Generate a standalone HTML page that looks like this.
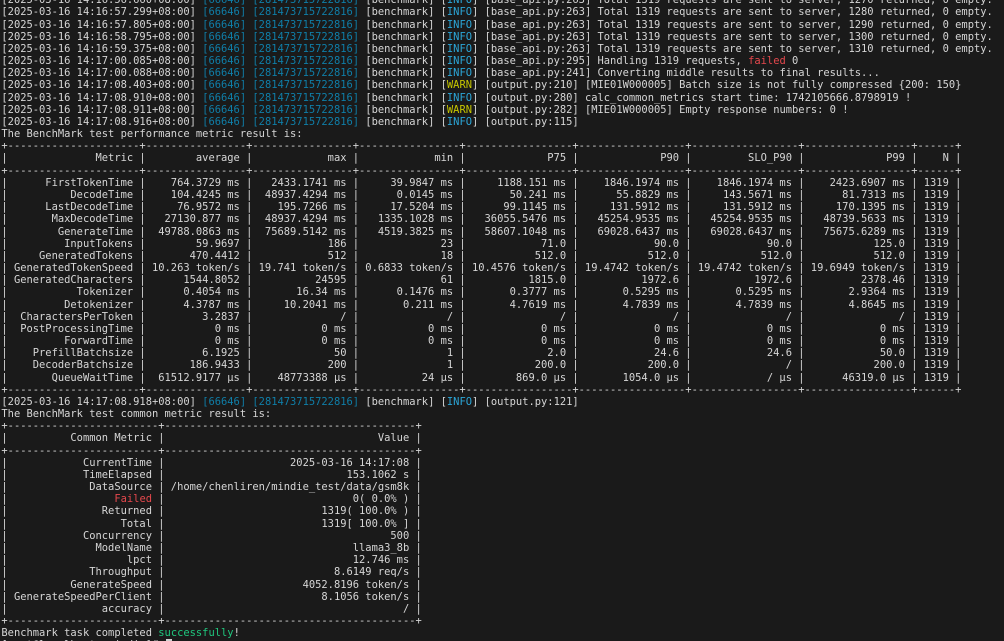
<!DOCTYPE html>
<html>
<head>
<meta charset="utf-8">
<style>
html,body{margin:0;padding:0;width:1004px;height:641px;overflow:hidden;background:#1a1a1a}
#w{position:absolute;left:0;top:0;width:1004px;height:641px;overflow:hidden;background:#1a1a1a}
pre{position:absolute;left:1.4px;top:-5.75px;margin:0;font-family:"DejaVu Sans Mono","Liberation Mono",monospace;font-size:10.43px;line-height:12.165px;color:#d6d6d6;white-space:pre;filter:blur(.25px)}
.c{color:#0f7ea8}
.i{color:#2ba6d8}
.w{color:#c6c600}
.r{color:#e5484d}
.g{color:#1fc77e}
.cur{position:absolute;left:166px;top:639px;width:6px;height:12px;background:#cfcfcf}
</style>
</head>
<body>
<div id="w">
<pre>[2025-03-16 14:16:56.660+08:00] <span class="c">[66646]</span> <span class="c">[281473715722816]</span> [benchmark] [<span class="i">INFO</span>] [base_api.py:263] Total 1319 requests are sent to server, 1270 returned, 0 empty.
[2025-03-16 14:16:57.299+08:00] <span class="c">[66646]</span> <span class="c">[281473715722816]</span> [benchmark] [<span class="i">INFO</span>] [base_api.py:263] Total 1319 requests are sent to server, 1280 returned, 0 empty.
[2025-03-16 14:16:57.805+08:00] <span class="c">[66646]</span> <span class="c">[281473715722816]</span> [benchmark] [<span class="i">INFO</span>] [base_api.py:263] Total 1319 requests are sent to server, 1290 returned, 0 empty.
[2025-03-16 14:16:58.795+08:00] <span class="c">[66646]</span> <span class="c">[281473715722816]</span> [benchmark] [<span class="i">INFO</span>] [base_api.py:263] Total 1319 requests are sent to server, 1300 returned, 0 empty.
[2025-03-16 14:16:59.375+08:00] <span class="c">[66646]</span> <span class="c">[281473715722816]</span> [benchmark] [<span class="i">INFO</span>] [base_api.py:263] Total 1319 requests are sent to server, 1310 returned, 0 empty.
[2025-03-16 14:17:00.085+08:00] <span class="c">[66646]</span> <span class="c">[281473715722816]</span> [benchmark] [<span class="i">INFO</span>] [base_api.py:295] Handling 1319 requests, <span class="r">failed</span> 0
[2025-03-16 14:17:00.088+08:00] <span class="c">[66646]</span> <span class="c">[281473715722816]</span> [benchmark] [<span class="i">INFO</span>] [base_api.py:241] Converting middle results to final results...
[2025-03-16 14:17:08.403+08:00] <span class="c">[66646]</span> <span class="c">[281473715722816]</span> [benchmark] [<span class="w">WARN</span>] [output.py:210] [MIE01W000005] Batch size is not fully compressed {200: 150}
[2025-03-16 14:17:08.910+08:00] <span class="c">[66646]</span> <span class="c">[281473715722816]</span> [benchmark] [<span class="i">INFO</span>] [output.py:280] calc_common_metrics start time: 1742105666.8798919 !
[2025-03-16 14:17:08.911+08:00] <span class="c">[66646]</span> <span class="c">[281473715722816]</span> [benchmark] [<span class="w">WARN</span>] [output.py:282] [MIE01W000005] Empty response numbers: 0 !
[2025-03-16 14:17:08.916+08:00] <span class="c">[66646]</span> <span class="c">[281473715722816]</span> [benchmark] [<span class="i">INFO</span>] [output.py:115]
The BenchMark test performance metric result is:
+---------------------+----------------+----------------+----------------+-----------------+-----------------+-----------------+-----------------+------+
|              Metric |        average |            max |            min |             P75 |             P90 |         SLO_P90 |             P99 |    N |
+---------------------+----------------+----------------+----------------+-----------------+-----------------+-----------------+-----------------+------+
|      FirstTokenTime |    764.3729 ms |   2433.1741 ms |     39.9847 ms |     1188.151 ms |    1846.1974 ms |    1846.1974 ms |    2423.6907 ms | 1319 |
|          DecodeTime |    104.4245 ms |  48937.4294 ms |      0.0145 ms |       50.241 ms |      55.8829 ms |     143.5671 ms |      81.7313 ms | 1319 |
|      LastDecodeTime |     76.9572 ms |    195.7266 ms |     17.5204 ms |      99.1145 ms |     131.5912 ms |     131.5912 ms |     170.1395 ms | 1319 |
|       MaxDecodeTime |   27130.877 ms |  48937.4294 ms |   1335.1028 ms |   36055.5476 ms |   45254.9535 ms |   45254.9535 ms |   48739.5633 ms | 1319 |
|        GenerateTime |  49788.0863 ms |  75689.5142 ms |   4519.3825 ms |   58607.1048 ms |   69028.6437 ms |   69028.6437 ms |   75675.6289 ms | 1319 |
|         InputTokens |        59.9697 |            186 |             23 |            71.0 |            90.0 |            90.0 |           125.0 | 1319 |
|     GeneratedTokens |       470.4412 |            512 |             18 |           512.0 |           512.0 |           512.0 |           512.0 | 1319 |
| GeneratedTokenSpeed | 10.263 token/s | 19.741 token/s | 0.6833 token/s | 10.4576 token/s | 19.4742 token/s | 19.4742 token/s | 19.6949 token/s | 1319 |
| GeneratedCharacters |      1544.8052 |          24595 |             61 |          1815.0 |          1972.6 |          1972.6 |         2378.46 | 1319 |
|           Tokenizer |      0.4054 ms |       16.34 ms |      0.1476 ms |       0.3777 ms |       0.5295 ms |       0.5295 ms |       2.9364 ms | 1319 |
|         Detokenizer |      4.3787 ms |     10.2041 ms |       0.211 ms |       4.7619 ms |       4.7839 ms |       4.7839 ms |       4.8645 ms | 1319 |
|  CharactersPerToken |         3.2837 |              / |              / |               / |               / |               / |               / | 1319 |
|  PostProcessingTime |           0 ms |           0 ms |           0 ms |            0 ms |            0 ms |            0 ms |            0 ms | 1319 |
|         ForwardTime |           0 ms |           0 ms |           0 ms |            0 ms |            0 ms |            0 ms |            0 ms | 1319 |
|    PrefillBatchsize |         6.1925 |             50 |              1 |             2.0 |            24.6 |            24.6 |            50.0 | 1319 |
|    DecoderBatchsize |       186.9433 |            200 |              1 |           200.0 |           200.0 |               / |           200.0 | 1319 |
|       QueueWaitTime |  61512.9177 µs |    48773388 µs |          24 µs |        869.0 µs |       1054.0 µs |            / µs |      46319.0 µs | 1319 |
+---------------------+----------------+----------------+----------------+-----------------+-----------------+-----------------+-----------------+------+
[2025-03-16 14:17:08.918+08:00] <span class="c">[66646]</span> <span class="c">[281473715722816]</span> [benchmark] [<span class="i">INFO</span>] [output.py:121]
The BenchMark test common metric result is:
+------------------------+----------------------------------------+
|          Common Metric |                                  Value |
+------------------------+----------------------------------------+
|            CurrentTime |                    2025-03-16 14:17:08 |
|            TimeElapsed |                             153.1062 s |
|             DataSource | /home/chenliren/mindie_test/data/gsm8k |
|                 <span class="r">Failed</span> |                              0( 0.0% ) |
|               Returned |                         1319( 100.0% ) |
|                  Total |                         1319[ 100.0% ] |
|            Concurrency |                                    500 |
|              ModelName |                              llama3_8b |
|                   lpct |                              12.746 ms |
|             Throughput |                           8.6149 req/s |
|          GenerateSpeed |                      4052.8196 token/s |
| GenerateSpeedPerClient |                         8.1056 token/s |
|               accuracy |                                      / |
+------------------------+----------------------------------------+
Benchmark task completed <span class="g">successfully</span>!
[root@localhost  mindie]# </pre>
<div class="cur"></div>
</div>
</body>
</html>
